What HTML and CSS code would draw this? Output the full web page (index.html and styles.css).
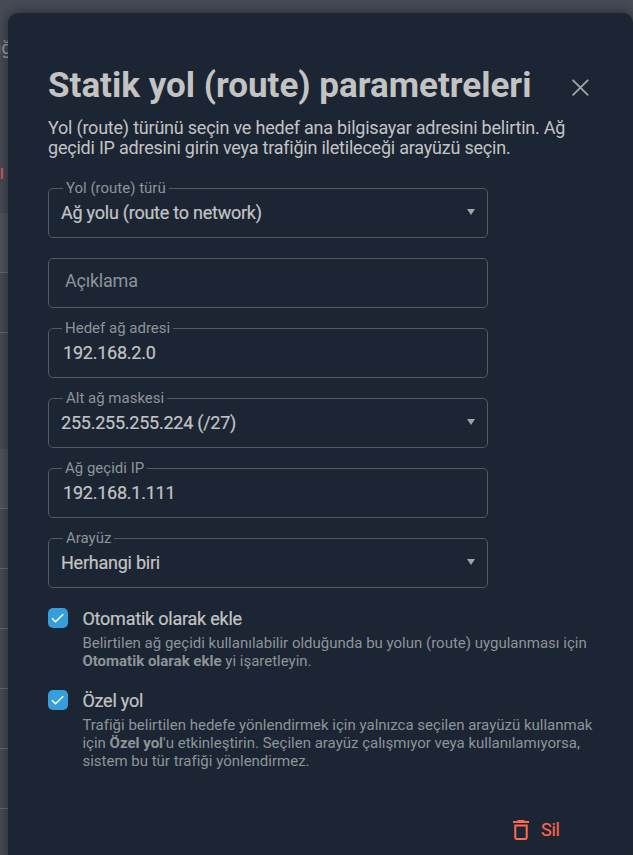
FILE: index.html
```html
<!DOCTYPE html>
<html lang="tr">
<head>
<meta charset="utf-8">
<title>Statik yol (route) parametreleri</title>
<link rel="stylesheet" href="styles.css">
</head>
<body>
<div class="page">
  <div class="page-head"><span class="page-text">ığ</span><span class="page-alert">l</span></div>
  <div class="row row-head"></div>
  <div class="row"></div>
  <div class="row row-gap"></div>
  <div class="row row-head"></div>
  <div class="row"></div>
  <div class="row"></div>
  <div class="row"></div>
  <div class="row"></div>
  <div class="row"></div>
</div>
<main class="dialog">
  <header class="dialog-head">
    <h1>Statik yol (route) parametreleri</h1>
    <svg class="close" viewBox="0 0 18 18"><path d="M2.1 1.3l14.6 14.6M16.7 1.3L2.1 15.9"/></svg>
  </header>
  <p class="intro">Yol (route) türünü seçin ve hedef ana bilgisayar adresini belirtin. Ağ<br>geçidi IP adresini girin veya trafiğin iletileceği arayüzü seçin.</p>
  <div class="fields">
    <div class="field select"><span class="label">Yol (route) türü</span><span class="value">Ağ yolu (route to network)</span><i class="caret"></i></div>
    <div class="field empty"><span class="placeholder">Açıklama</span></div>
    <div class="field input"><span class="label">Hedef ağ adresi</span><span class="value">192.168.2.0</span></div>
    <div class="field select"><span class="label">Alt ağ maskesi</span><span class="value">255.255.255.224 (/27)</span><i class="caret"></i></div>
    <div class="field input"><span class="label">Ağ geçidi IP</span><span class="value">192.168.1.111</span></div>
    <div class="field select"><span class="label">Arayüz</span><span class="value">Herhangi biri</span><i class="caret"></i></div>
  </div>
  <div class="option">
    <span class="check"><svg viewBox="0 0 20 20"><path d="M4 10.3l3.5 3.5L15.2 6.2"/></svg></span>
    <div class="option-body">
      <div class="option-title">Otomatik olarak ekle</div>
      <div class="hint">Belirtilen ağ geçidi kullanılabilir olduğunda bu yolun (route) uygulanması için<br><b>Otomatik olarak ekle</b> yi işaretleyin.</div>
    </div>
  </div>
  <div class="option">
    <span class="check"><svg viewBox="0 0 20 20"><path d="M4 10.3l3.5 3.5L15.2 6.2"/></svg></span>
    <div class="option-body">
      <div class="option-title">Özel yol</div>
      <div class="hint">Trafiği belirtilen hedefe yönlendirmek için yalnızca seçilen arayüzü kullanmak<br>için <b>Özel yol</b>'u etkinleştirin. Seçilen arayüz çalışmıyor veya kullanılamıyorsa,<br>sistem bu tür trafiği yönlendirmez.</div>
    </div>
  </div>
  <footer class="actions">
    <svg class="trash" viewBox="0 0 16 20"><path class="lid" d="M0 1h4.5V0h7v1H16v2H0z"/><path class="can" d="M2.3 5.4h11.4v12.2q0 1.3-1.3 1.3H3.6q-1.3 0-1.3-1.3z"/></svg>
    <span>Sil</span>
  </footer>
</main>
</body>
</html>
```
FILE: styles.css
```css
* { box-sizing: border-box; }
body {
  margin: 0;
  height: 855px;
  overflow: hidden;
  position: relative;
  background: #484c57;
  font-family: Roboto, sans-serif;
  color: #c3c3c2;
}
.page { display: flex; flex-direction: column; }
.page-head { height: 213px; padding-top: 37px; display: flex; flex-direction: column; width: 633px; }
.page-text { font-size: 18px; line-height: 22px; color: #9aa6ae; margin-left: -3px; }
.page-alert { font-size: 14px; line-height: 20px; font-weight: 500; color: #e0605a; margin-top: 105px; }
.row { height: 60px; border-bottom: 1px solid #6b7077; }
.row-head { background: #53555f; }
.row-gap { height: 116px; border-bottom: 0; }
.dialog {
  position: absolute;
  left: 8px;
  top: 13px;
  width: 625px;
  height: 850px;
  padding: 52px 40px 0;
  border-radius: 10px;
  background: #1c2534;
  box-shadow: 0 0 14px rgba(0, 0, 0, .5);
}
.dialog-head { display: flex; justify-content: space-between; height: 40px; }
h1 { margin: 0; font-size: 35px; line-height: 42px; font-weight: 700; white-space: nowrap; }
.close { width: 18px; height: 18px; margin: 14px 4px 0 0; fill: none; stroke: #a0a5a7; stroke-width: 1.8; stroke-linecap: round; }
.intro { margin: 13px 0 0; font-size: 18px; line-height: 20px; letter-spacing: -.22px; white-space: nowrap; }
.fields { display: grid; grid-auto-rows: 50px; gap: 20px; width: 440px; margin-top: 30px; }
.field { position: relative; border: 1px solid #525a63; border-radius: 5px; display: flex; padding: 14px 12px 0; }
.input { padding-left: 14px; }
.empty { padding-left: 16px; padding-top: 12px; }
.label {
  position: absolute;
  left: 14px;
  top: -10px;
  padding: 0 3px;
  background: #1c2534;
  font-size: 15px;
  line-height: 18px;
  color: #8d9497;
  white-space: nowrap;
}
.input .label { left: 13px; }
.value { font-size: 18px; line-height: 20px; letter-spacing: -.24px; -webkit-text-stroke: .2px; white-space: nowrap; }
.placeholder { font-size: 18px; line-height: 20px; letter-spacing: -.22px; color: #8d9497; }
.caret { margin: 6px 0 0 auto; width: 8px; height: 6px; background: #a0a5a7; clip-path: polygon(0 0, 100% 0, 50% 100%); }
.option { display: flex; margin-top: 20px; }
.check { flex: none; width: 20px; height: 20px; border-radius: 5px; background: #359edb; }
.check svg { display: block; fill: none; stroke: #fff; stroke-width: 1.4; }
.option-body { margin-left: 14.4px; }
.option-title { font-size: 18px; line-height: 22px; letter-spacing: -.22px; -webkit-text-stroke: .2px; }
.hint { margin-top: 4px; font-size: 15px; line-height: 18px; color: #8d9497; white-space: nowrap; }
.actions { display: flex; margin: 49px 0 0 465px; color: #ff6450; font-size: 18px; line-height: 22px; letter-spacing: -.22px; -webkit-text-stroke: .2px; }
.actions span { margin-left: 12px; }
.trash { width: 16px; height: 20px; margin-top: 1px; fill: none; stroke: #ff6b50; stroke-width: 2; }
.trash .lid { fill: #ff6b50; stroke: none; }
```
